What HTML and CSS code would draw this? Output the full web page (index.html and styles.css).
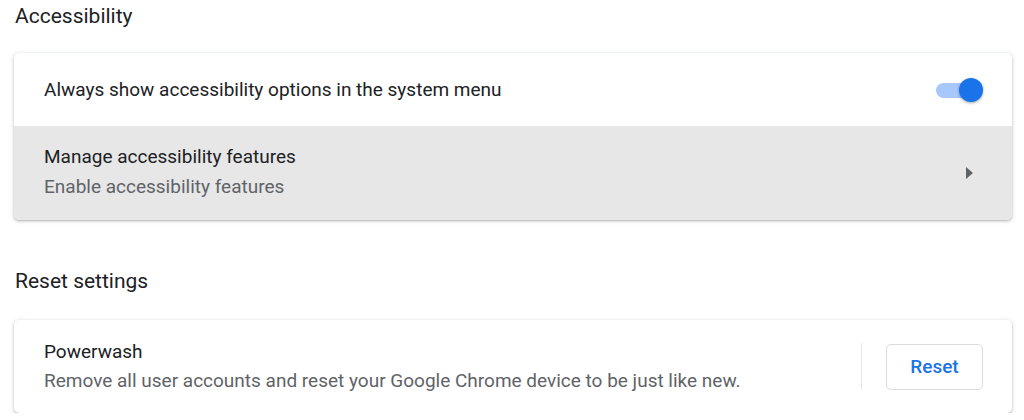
FILE: index.html
```html
<!DOCTYPE html>
<html>
<head>
<meta charset="utf-8">
<link rel="stylesheet" href="styles.css">
</head>
<body>
<div class="page">
  <h2 class="section-title">Accessibility</h2>
  <div class="card">
    <div class="row row-toggle">
      <div class="label">Always show accessibility options in the system menu</div>
      <div class="toggle"><div class="track"></div><div class="knob"></div></div>
    </div>
    <div class="row row-link">
      <div class="text">
        <div class="label">Manage accessibility features</div>
        <div class="sub">Enable accessibility features</div>
      </div>
      <svg class="arrow" width="10" height="14" viewBox="0 0 10 14"><path d="M2 1 L9 7 L2 13 Z" fill="#5f6368"/></svg>
    </div>
  </div>
  <h2 class="section-title second">Reset settings</h2>
  <div class="card">
    <div class="row row-reset">
      <div class="text">
        <div class="label">Powerwash</div>
        <div class="sub">Remove all user accounts and reset your Google Chrome device to be just like new.</div>
      </div>
      <div class="sep"></div>
      <button class="btn">Reset</button>
    </div>
  </div>
</div>
</body>
</html>
```
FILE: styles.css
```css
html, body { margin: 0; padding: 0; background: #fff; }
body { font-family: Roboto, "Liberation Sans", Arial, sans-serif; color: #202124; }
.page { padding: 4px 12px 0 14px; }
.section-title {
  margin: 0 0 25px 1px;
  font-size: 21px;
  font-weight: 400;
  line-height: 24px;
  color: #202124;
}
.section-title.second { margin-top: 49px; margin-bottom: 27px; }
.card {
  background: #fff;
  border-radius: 5px;
  box-shadow: 0 1px 2px rgba(60,64,67,0.3), 0 1px 4px 1px rgba(60,64,67,0.12);
  overflow: hidden;
}
.row {
  display: flex;
  align-items: center;
  padding: 0 28px 0 30px;
}
.row-toggle { height: 73px; }
.row-link { height: 94px; background: #e7e7e7; padding-right: 38px; }
.row-reset { height: 93px; padding-right: 29px; }
.label { font-size: 19px; line-height: 28px; color: #202124; }
.sub { font-size: 19px; line-height: 30px; color: #5f6368; }
.row-link .label { line-height: 30px; }
.row-link .text { margin-top: -2px; }
.text { flex: 1; }
.row-toggle .label { flex: 1; }
.toggle { position: relative; width: 48px; height: 26px; }
.track {
  position: absolute; left: 0; top: 6px; width: 38px; height: 15px;
  border-radius: 8px; background: #a8c7fa;
}
.knob {
  position: absolute; left: 23px; top: 1px; width: 24px; height: 24px;
  border-radius: 50%; background: #1a73e8;
  box-shadow: 0 1px 3px rgba(0,0,0,0.35);
}
.arrow { display: block; }
.sep { width: 1px; height: 47px; background: #e6e6e6; margin: 0 24px 0 20px; }
.btn {
  width: 97px; height: 46px;
  border: 1px solid #dadce0; border-radius: 5px; background: #fff;
  color: #1a73e8; font-family: Roboto, "Liberation Sans", Arial, sans-serif;
  font-size: 19px; font-weight: 500; padding: 0;
}
```
